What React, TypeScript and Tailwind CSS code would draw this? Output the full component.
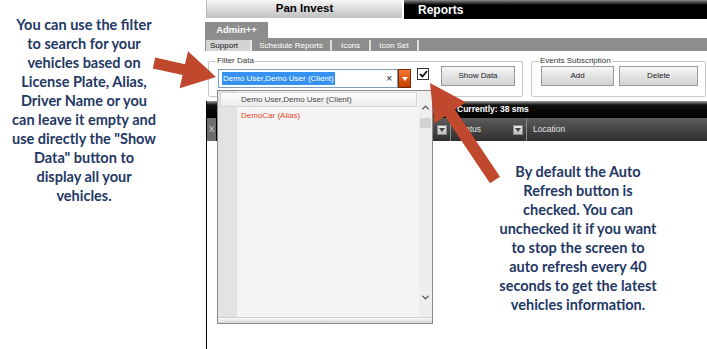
import { ChevronUp, ChevronDown } from 'lucide-react';

function Caret({ fill = '#fff' }: { fill?: string }) {
  return (
    <svg width="6" height="4" viewBox="0 0 6 4">
      <path d="M0 0h6L3 4z" fill={fill} />
    </svg>
  );
}

function HeadBtn() {
  return (
    <div className="w-[10px] h-[10px] border border-[#8a8a8a] bg-[linear-gradient(#ececec,#bdbdbd)] flex items-center justify-center">
      <Caret fill="#444" />
    </div>
  );
}

function DropdownList() {
  return (
    <div className="absolute left-[217px] top-[90px] w-[216px] h-[234px] border border-[#8a8a8a] bg-[#f4f4f4] flex flex-col font-['Liberation_Sans',Arial,sans-serif] text-[8px]">
      <div className="flex-1 flex">
        <div className="w-[201px] bg-[linear-gradient(to_right,#e3e3e3_19px,#f4f4f4_19px)]">
          <div className="mx-[2px] mt-[1px] h-[15px] border border-[#d6d6d6] bg-[linear-gradient(#fdfdfd,#ebebeb)] pl-[20px] text-[#444] flex items-center">
            Demo User,Demo User (Client)
          </div>
          <div className="h-[18px] pl-[23px] text-[#e5431c] flex items-center">DemoCar (Alias)</div>
        </div>
        <div className="w-[13px] bg-[#eeeeee] flex flex-col items-center pt-[11px] pb-[14px]">
          <ChevronUp size={11} strokeWidth={3} color="#555" />
          <div className="w-[11px] h-[10px] mt-[5px] bg-[#d2d2d2]" />
          <div className="mt-auto">
            <ChevronDown size={11} strokeWidth={3} color="#555" />
          </div>
        </div>
      </div>
      <div className="h-[6px] border-t border-[#cfcfcf] bg-[linear-gradient(#fafafa,#d6d6d6)] flex items-center justify-center text-[5px] leading-none text-[#999] tracking-[1px]">
        ....
      </div>
    </div>
  );
}

export default function App() {
  return (
    <div className="relative w-[707px] h-[349px] overflow-hidden bg-white flex">
      <div className="w-[205px] shrink-0 pt-[15px]">
        <p className="w-[168px] text-center font-['Lato',sans-serif] font-bold text-[14.5px] leading-[19px] text-[#1f3864]">
          You can use the filter<br />
          to search for your<br />
          vehicles based on<br />
          License Plate, Alias,<br />
          Driver Name or you<br />
          can leave it empty and<br />
          use directly the "Show<br />
          Data" button to<br />
          display all your<br />
          vehicles.
        </p>
      </div>

      <div className="flex-1 flex flex-col font-['Liberation_Sans',Arial,sans-serif] text-[8px]">
        <div className="h-[20px] flex items-start">
          <div className="ml-[1px] w-[196px] h-[18px] border-l border-[#bcbcbc] bg-[linear-gradient(#f6f6f6,#c0c0c0)] flex items-center justify-center font-bold text-[11.5px] text-black">
            Pan Invest
          </div>
          <div className="ml-[2px] flex-1 h-[19px] bg-[linear-gradient(#8a8a8a,#000_5px,#000)] pl-[14px] flex items-center font-bold text-[12px] text-white">
            Reports
          </div>
        </div>

        <div className="mt-[2px] w-[63px] h-[16px] bg-[#8d8d8d] flex items-center justify-center font-bold text-[9.5px] text-white">
          Admin++
        </div>
        <div className="h-[13px] bg-[#8e8e8e] flex items-end pl-[1px] text-white">
          <div className="w-[46px] h-[11px] bg-[#d4d4d4] border-r-2 border-[#e8e8e8] pl-[4px] flex items-center text-[#111]">Support</div>
          <div className="w-[80px] h-[11px] border-r-2 border-[#dcdcdc] flex items-center justify-center">Schedule Reports</div>
          <div className="w-[39px] h-[11px] border-r-2 border-[#dcdcdc] flex items-center justify-center">Icons</div>
          <div className="w-[48px] h-[11px] border-r-2 border-[#dcdcdc] flex items-center justify-center">Icon Set</div>
        </div>

        <div className="h-[50px] flex items-start">
          <fieldset className="ml-[3px] mt-[5px] w-[315px] h-[41px] border border-[#c8c8c8] rounded-[2px]">
            <legend className="ml-[7px] px-[1px] leading-[10px] text-[#333]">Filter Data</legend>
            <div className="flex items-start pl-[9px] pt-[3px]">
              <div className="w-[180px] h-[19px] border border-[#7f9db9] bg-white flex items-center pl-[3px] pr-[5px]">
                <span className="bg-[#3592f0] text-white leading-[13px] px-[1px]">Demo User,Demo User (Client)</span>
                <span className="ml-auto text-[10px] leading-none text-[#222]">×</span>
              </div>
              <div className="w-[13px] h-[19px] border border-[#6b2a0a] bg-[linear-gradient(#f7772f,#c24000)] flex items-center justify-center">
                <Caret />
              </div>
              <div className="ml-[6px] mt-[-1px] w-[12px] h-[12px] border border-[#333] bg-white flex items-center justify-center">
                <svg width="9" height="8" viewBox="0 0 9 8">
                  <path d="M1 4l2.5 2.5L8 1" stroke="#111" strokeWidth="1.8" fill="none" />
                </svg>
              </div>
              <div className="ml-[12px] mt-[-3px] w-[74px] h-[20px] border border-[#9a9a9a] bg-[linear-gradient(#f6f6f6,#d2d2d2)] flex items-center justify-center text-[#222]">
                Show Data
              </div>
            </div>
          </fieldset>
          <fieldset className="ml-[8px] mt-[5px] w-[175px] h-[41px] border border-[#c8c8c8] rounded-[2px]">
            <legend className="ml-[7px] px-[1px] leading-[10px] text-[#333]">Events Subscription</legend>
            <div className="flex items-start pl-[9px]">
              <div className="w-[73px] h-[20px] border border-[#9a9a9a] bg-[linear-gradient(#f6f6f6,#d2d2d2)] flex items-center justify-center text-[#222]">
                Add
              </div>
              <div className="ml-[5px] w-[79px] h-[20px] border border-[#9a9a9a] bg-[linear-gradient(#f6f6f6,#d2d2d2)] flex items-center justify-center text-[#222]">
                Delete
              </div>
            </div>
          </fieldset>
        </div>

        <div className="flex-1 ml-[1px] border-l border-black flex flex-col">
          <div className="h-[17px] bg-[linear-gradient(#a0a0a0,#111_4px,#000)] flex items-center font-bold text-[8.5px] text-white">
            <span className="w-[250px] text-right pr-[4px]">SMS Package 1:</span>
            <span>Currently: 38 sms</span>
          </div>
          <div className="h-[23px] bg-[linear-gradient(#5c5c5c,#2e2e2e)] flex text-[#e4e4e4] text-[8.5px]">
            <div className="w-[10px] bg-[#6e6e6e] border-r border-black flex items-center justify-center text-[#cfcfcf]">X</div>
            <div className="w-[234px] border-r border-[#8a8a8a] flex items-center justify-end pr-[3px]">
              <HeadBtn />
            </div>
            <div className="w-[76px] border-r border-[#8a8a8a] flex items-center justify-between pl-[6px] pr-[3px]">
              <span>Status</span>
              <HeadBtn />
            </div>
            <div className="flex-1 flex items-center pl-[6px]">Location</div>
          </div>
          <div className="flex-1 bg-white" />
        </div>
      </div>

      <DropdownList />

      <p className="absolute left-[483px] top-[162px] w-[190px] text-center font-['Lato',sans-serif] font-bold text-[14.5px] leading-[19px] text-[#1f3864]">
        By default the Auto<br />
        Refresh button is<br />
        checked. You can<br />
        unchecked it if you want<br />
        to stop the screen to<br />
        auto refresh every 40<br />
        seconds to get the latest<br />
        vehicles information.
      </p>

      <svg className="absolute left-0 top-0 pointer-events-none" width="707" height="349" viewBox="0 0 707 349">
        <polygon
          points="155.2,57.6 185,64.3 188,51.2 216,77 179.6,88.2 182.6,75.1 152.8,68.4"
          fill="#c0482d"
        />
        <polygon
          points="455,109.6 465.8,102.3 430,83 434.2,123.5 445,116.2 490,183.3 500,176.7"
          fill="#c0482d"
        />
      </svg>
    </div>
  );
}
